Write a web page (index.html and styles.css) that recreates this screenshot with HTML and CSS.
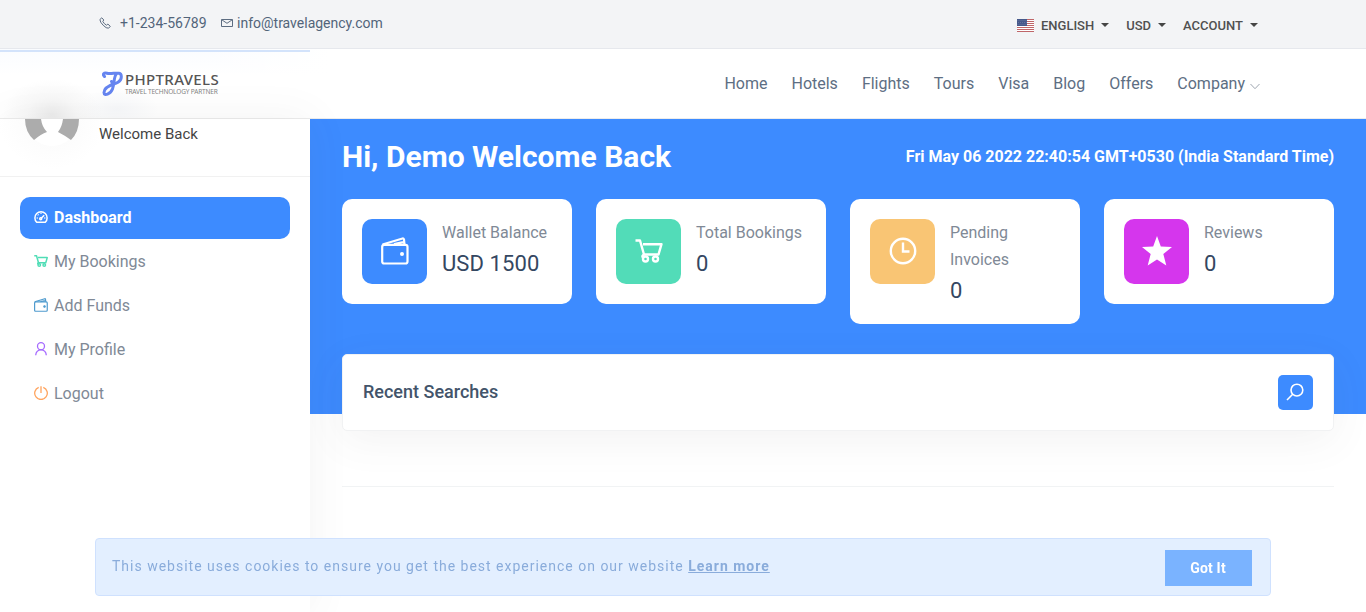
FILE: index.html
```html
<!DOCTYPE html>
<html lang="en">
<head>
<meta charset="utf-8">
<title>Dashboard - PHPTRAVELS</title>
<link rel="stylesheet" href="styles.css">
</head>
<body>
<svg class="defs" width="0" height="0" aria-hidden="true">
  <symbol id="i-wallet" viewBox="0 0 28 28"><g fill="none" stroke="currentColor" stroke-width="var(--sw,2.2)" stroke-linejoin="round"><rect x="1.200" y="7.800" width="25.300" height="18.700" rx="2"/><path d="M1.500 7.500 21.500 1.500Q22.700 1.200 23 2.500L23.500 7.500M13 7.200 22.500 5.200"/></g><circle cx="21" cy="17" r="2" fill="currentColor"/></symbol>
  <symbol id="i-cart" viewBox="0 0 28 24"><g fill="none" stroke="currentColor" stroke-width="var(--sw,2.4)" stroke-linejoin="round"><path d="M.5 1.500H5L9 15.500H23.500L26.500 5.200H8"/><path d="M9 15.500Q6.500 17 8 18.500"/><circle cx="10.500" cy="20" r="2.500"/><circle cx="20.500" cy="20" r="2.500"/></g></symbol>
</svg>
<div class="page">
  <div class="topbar">
    <div class="contact">
      <svg class="phone" viewBox="0 0 12 12"><path d="M2.800.8 4.800 3 3.800 4.400Q5 6.800 7.500 8.200L8.900 7.100 11.300 9.300 9.600 11.200Q7.500 11.600 4.200 8.300T.9 2.500Z"/></svg>
      <span class="tel">+1-234-56789</span>
      <svg class="mail" viewBox="0 0 12 10"><path d="M.5 1.500H11.500V8.500H.5ZM.8 1.800 6 5.300 11.200 1.800"/></svg>
      <span class="email">info@travelagency.com</span>
    </div>
    <div class="prefs">
      <svg class="flag" viewBox="0 0 17 13"><path fill="#fff" d="M0 0h17v13H0z"/><path stroke="#bf6669" d="M0 .5h17M0 2.500h17M0 4.500h17M0 6.500h17M0 8.500h17M0 10.500h17M0 12.500h17"/><path fill="#46598b" d="M0 0h10v7H0z"/><path stroke="#7583a9" stroke-width=".6" stroke-dasharray="1 1" d="M.5 1.500h9M1 3.500h9M.5 5.500h9"/></svg>
      <span class="pref lang">ENGLISH</span><span class="pref cur">USD</span><span class="pref">ACCOUNT</span>
    </div>
  </div>
  <header class="header">
    <div class="logo">
      <svg class="mark" viewBox="0 0 21 26"><path d="M2.500 5.500C0 3.500 2 1.500 5 2.300S14 1.800 17 2.300 20.500 8.500 16 11.300 10 12.500 9.500 10.500M14 3.500C11.500 7 12.500 13 10.500 18S2 25.500 2 21.500 7 14.500 13 12.500"/></svg>
      <div class="words"><span class="name">PHPTRAVELS</span><span class="tag">TRAVEL TECHNOLOGY PARTNER</span></div>
    </div>
    <nav class="nav"><a>Home</a><a>Hotels</a><a>Flights</a><a>Tours</a><a>Visa</a><a>Blog</a><a>Offers</a><a>Company<svg viewBox="0 0 10 7"><path d="M.5 1 5 5.700 9.500 1"/></svg></a></nav>
  </header>
  <div class="body">
    <aside class="side">
      <div class="user">
        <svg class="avatar" viewBox="0 0 54 27"><path fill="#fff" d="M0 0H54A27 27 0 0 1 0 0Z"/><path fill="#acacac" d="M0 0H16Q17 8 22 13Q16 15 9 21Q0 13 0 0ZM38 0H54Q54 13 46 21Q39 16 33 13Q37 8 38 0Z"/></svg>
        <span>Welcome Back</span>
      </div>
      <ul class="menu">
        <li class="active"><svg viewBox="0 0 14 14"><path d="M2.700 12.200A6.100 6.100 0 1 1 11.300 12.200ZM7 8.600 10.200 5.200"/><circle cx="6.700" cy="8.700" r="1"/><path d="M7 2.700v1M3.800 4.500l.7.700M2.700 8h1M11.300 8h-1"/></svg>Dashboard</li>
        <li class="green"><svg><use href="#i-cart"/></svg>My Bookings</li>
        <li class="blue"><svg><use href="#i-wallet"/></svg>Add Funds</li>
        <li class="purple"><svg viewBox="0 0 14 14"><circle cx="7" cy="4.200" r="3.500"/><path d="M1.700 13.200Q2 8.500 7 7.700 12 8.500 12.300 13.200"/></svg>My Profile</li>
        <li class="orange"><svg viewBox="0 0 14 14"><path d="M4.700 1.300A6.300 6.300 0 1 0 9.300 1.300M7 .3V7"/></svg>Logout</li>
      </ul>
    </aside>
    <main class="main">
      <section class="hero">
        <div class="greet"><h1>Hi, Demo Welcome Back</h1><span class="date">Fri May 06 2022 22:40:54 GMT+0530 (India Standard Time)</span></div>
        <div class="cards">
          <div class="card"><div class="tile c-blue"><svg><use href="#i-wallet"/></svg></div><div><p>Wallet Balance</p><h4>USD 1500</h4></div></div>
          <div class="card"><div class="tile c-green"><svg><use href="#i-cart"/></svg></div><div><p>Total Bookings</p><h4>0</h4></div></div>
          <div class="card"><div class="tile c-orange"><svg viewBox="0 0 28 28"><g fill="none" stroke="currentColor" stroke-width="2.400"><circle cx="14" cy="14" r="12.200"/><path d="M14 5.500V14.500H20.500"/></g></svg></div><div><p>Pending Invoices</p><h4>0</h4></div></div>
          <div class="card"><div class="tile c-pink"><svg class="star" viewBox="0 0 30 30"><path fill="currentColor" d="m15 0 3.800 10.400 11.200.5-8.700 7L24.300 29.500 15 23.400 5.700 29.500 8.700 17.900 0 10.900l11.200-.5z"/></svg></div><div><p>Reviews</p><h4>0</h4></div></div>
        </div>
      </section>
      <section class="recent"><h3>Recent Searches</h3><div class="search"><svg viewBox="0 0 18 18"><circle cx="10.900" cy="7.100" r="5.900"/><path d="M6.700 11.300 1 17"/></svg></div></section>
      <hr>
    </main>
  </div>
</div>
<div class="cookie"><p>This website uses cookies to ensure you get the best experience on our website <a>Learn more</a></p><button>Got It</button></div>
</body>
</html>
```
FILE: styles.css
```css
*{box-sizing:border-box}
body{margin:0;background:#fff;font-family:Roboto,sans-serif;color:#2d4059;overflow:hidden}
h1,h3,h4,p,ul{margin:0;padding:0}
.defs{display:block}
.page{height:612px;display:flex;flex-direction:column;overflow:hidden}
.topbar{height:49px;flex:none;background:#f3f4f6;border-bottom:1px solid #e6e8ed;display:flex;justify-content:space-between;padding:0 108px 0 99px}
.contact{display:flex;align-items:center;height:46px;font-size:14px;color:#52647a}
.contact svg{fill:none;stroke:#5c6c81;stroke-width:1}
.phone{width:12px;height:12px;margin-right:9px}
.mail{width:12px;height:10px;margin:0 5px 0 14px}
.email{margin-left:-.5px}
.prefs{display:flex;align-items:center;height:51px;font-size:13px;font-weight:500;color:#505050}
.flag{width:17px;height:13px;margin-right:7px}
.pref{display:flex;align-items:center;margin-right:17px}
.pref:last-child{margin-right:0}
.pref::after{content:"";margin-left:7px;margin-top:-2px;border:4px solid transparent;border-top-color:#454545;border-bottom:0}
.header{height:70px;flex:none;border-bottom:1px solid #ececec;background:radial-gradient(ellipse 50px 36px at 52px 66px,#ececec 0,rgba(242,242,242,.5) 50%,rgba(255,255,255,0) 100%),radial-gradient(ellipse 42px 20px at 117px 60px,#f7f8fa,rgba(255,255,255,0)),linear-gradient(#d3e3fb,#d3e3fb) 0 1px/310px 2px no-repeat,linear-gradient(90deg,rgba(255,255,255,0) 200px,#fff 330px),linear-gradient(#fafcff,#fff 26px);display:flex;justify-content:space-between;padding:0 106px 0 102px}
.logo{display:flex;padding-top:22px;gap:2px}
.mark{width:21px;height:26px;fill:none;stroke:#6685f0;stroke-width:3;stroke-linecap:round}
.words{display:flex;flex-direction:column;font-family:"Noto Sans",sans-serif;color:#555;white-space:nowrap}
.name{font-size:15px;font-weight:500;line-height:17px;letter-spacing:.35px}
.tag{font-size:6.500px;line-height:8px;letter-spacing:-.17px;color:#858585}
.nav{display:flex;gap:24px;height:69px;align-items:center;font-size:16px;color:#5d6e83}
.nav svg{width:10px;height:7px;margin-left:5px;fill:none;stroke:#9da5af;vertical-align:-1px}
.body{flex:1;display:flex;min-height:0}
.side{width:310px;flex:none;background:#fff;box-shadow:0 0 40px rgba(82,85,90,.07);position:relative}
.user{height:58px;border-bottom:1px solid #f1f1f1;display:flex;padding-left:25px;font-size:15px;color:#444;background:radial-gradient(ellipse 54px 50px at 52px 0,#f9f9f9,#fff)}
.user span{margin:6px 0 0 20px}
.avatar{width:54px;height:27px}
.menu{list-style:none;padding:20px;display:flex;flex-direction:column;gap:2px}
.menu li{height:42px;display:flex;align-items:center;gap:6px;padding:0 0 2px 14px;font-size:16px;color:#808996;border-radius:10px}
.menu svg{width:14px;height:14px;fill:none;stroke:currentColor;stroke-width:1.300;--sw:2.400;margin-top:-1px}
.menu .green svg{--sw:3}
.menu .active svg{stroke-width:1.500}
.menu .active{background:#3d8bff;color:#fff;font-weight:700}
.green svg{color:#50ddb6}.blue svg{color:#4f9bce}.purple svg{color:#a66bff}.orange svg{color:#ffa45e}
.main{flex:1;min-width:0}
.hero{height:295px;background:#3d8bff;padding:16px 32px 0;color:#fff}
.greet{display:flex;justify-content:space-between;align-items:center;height:42px}
h1{font-size:30px;font-weight:700}
.date{font-size:16px;font-weight:700}
.cards{display:grid;grid-template-columns:repeat(4,1fr);gap:24px;align-items:start;margin-top:22px}
.card{background:#fff;border-radius:10px;padding:20px;display:flex;gap:15px;align-items:flex-start}
.tile{width:65px;height:65px;flex:none;border-radius:10px;display:flex;align-items:center;justify-content:center;padding:0 0 2px}
.tile svg{width:28px;height:28px}
.tile .star{width:30px;height:30px}
.c-blue{background:#3d8bff}.c-green{background:#52dcb8}.c-orange{background:#f9c574}.c-pink{background:#d536ed}
.card p{font-size:16px;line-height:27px;color:#808996}
.card h4{font-size:22px;font-weight:400;line-height:26px;color:#344761;margin-top:5px;letter-spacing:.1px}
.recent{position:relative;height:77px;margin:-60px 32px 0;background:#fff;border:1px solid #f1f2f3;border-radius:5px;box-shadow:0 10px 40px rgba(82,85,90,.07);padding:0 20px;display:flex;align-items:center;justify-content:space-between}
h3{font-size:18px;font-weight:500;color:#43546a;margin-top:-2px}
.search{width:35px;height:35px;border-radius:5px;background:#3d8bff;display:flex;align-items:center;justify-content:center}
.search svg{width:18px;height:18px;fill:none;stroke:#fff;stroke-width:1.600;margin:0 1px 2px 0}
hr{border:0;border-top:1px solid #f1f3f4;margin:55px 32px 0}
.cookie{position:fixed;left:95px;top:538px;width:1176px;height:58px;background:rgba(225,238,255,.93);border:1px solid #cfe1fe;border-radius:4px;display:flex;justify-content:space-between;align-items:center;padding:0 18px 0 16px;color:#8aacdb;font-size:14px;letter-spacing:.995px}
.cookie p{margin-top:-3px}
.cookie a{font-weight:700;text-decoration:underline}
.cookie button{width:87px;height:36px;margin-top:2px;border:0;background:#7ab3ff;color:#fff;font:700 14px Roboto,sans-serif;letter-spacing:.2px;padding:0 1px 0 0}
```
